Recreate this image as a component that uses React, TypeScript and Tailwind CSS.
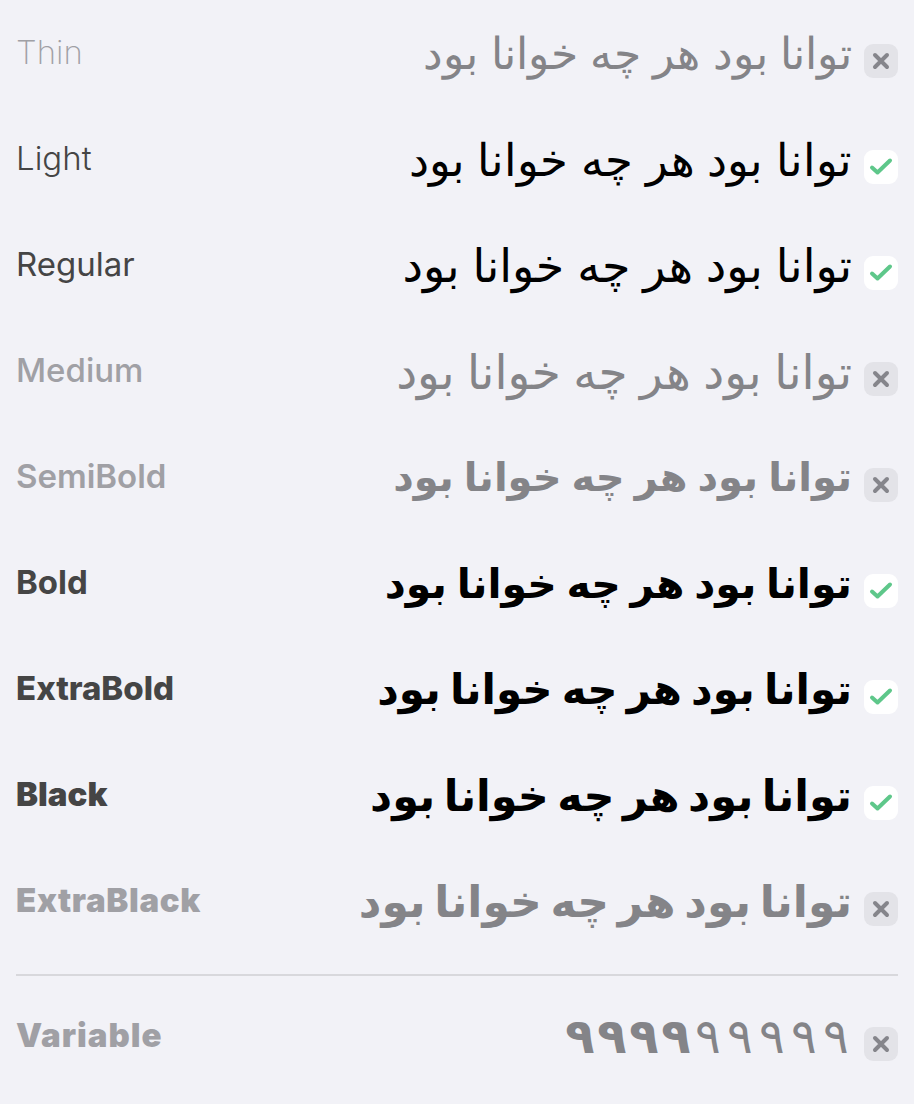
const SAMPLE = "توانا بود هر چه خوانا بود";

const WEIGHTS = [
  { name: "Thin", cls: "font-thin", label: "font-extralight", size: "text-[44px]", on: false },
  { name: "Light", cls: "font-light", label: "font-light", size: "text-[45px]", on: true },
  { name: "Regular", cls: "font-normal", label: "font-normal", size: "text-[46px]", on: true },
  { name: "Medium", cls: "font-medium", label: "font-medium", size: "text-[47px]", on: false },
  { name: "SemiBold", cls: "font-semibold", label: "font-semibold", size: "text-[40px]", on: false },
  { name: "Bold", cls: "font-bold", label: "font-bold", size: "text-[41px]", on: true },
  { name: "ExtraBold", cls: "font-extrabold", label: "font-extrabold", size: "text-[42px]", on: true },
  { name: "Black", cls: "font-black", label: "font-black", size: "text-[43px]", on: true },
  { name: "ExtraBlack", cls: "font-black", label: "font-black tracking-[0.02em]", size: "text-[44px]", on: false },
];

const DIGIT_WEIGHTS = [
  "font-black",
  "font-extrabold",
  "font-bold",
  "font-semibold",
  "font-medium",
  "font-normal",
  "font-light",
  "font-extralight",
  "font-thin",
];

function Mark({ on }: { on: boolean }) {
  return on ? (
    <span className="mt-[16px] flex h-[34px] w-[34px] shrink-0 rounded-[9px] bg-white">
      <svg viewBox="0 0 34 34" className="h-full w-full">
        <polyline
          points="8,17.5 13.5,22.5 26,10.5"
          fill="none"
          stroke="#5ec78a"
          strokeWidth={4}
          strokeLinecap="round"
          strokeLinejoin="round"
        />
      </svg>
    </span>
  ) : (
    <span className="mt-[16px] flex h-[34px] w-[34px] shrink-0 rounded-[9px] bg-[#e3e3e8]">
      <svg viewBox="0 0 34 34" className="h-full w-full">
        <path
          d="M11 11 L23 23 M23 11 L11 23"
          fill="none"
          stroke="#85858b"
          strokeWidth={4}
          strokeLinecap="round"
        />
      </svg>
    </span>
  );
}

type RowProps = { name: string; cls: string; label: string; size: string; on: boolean };

function Row({ name, cls, label, size, on }: RowProps) {
  return (
    <div className="flex h-[106px] items-center justify-between">
      <span className={`text-[33px] ${label} ${on ? "text-[#454545]" : "text-[#a0a0a5]"}`}>{name}</span>
      <div className="flex items-center gap-3">
        <span dir="rtl" className={`${size} ${cls} leading-none ${on ? "text-black" : "text-[#848488]"}`}>
          {SAMPLE}
        </span>
        <Mark on={on} />
      </div>
    </div>
  );
}

export default function App() {
  return (
    <div className="min-h-screen bg-[#f2f2f7] px-4 font-['Inter','DejaVu_Sans',sans-serif]">
      {WEIGHTS.map((w) => (
        <Row key={w.name} {...w} />
      ))}
      <div className="mt-5 h-[2px] bg-[#d8d8dc]" />
      <div className="flex h-[120px] items-center justify-between">
        <span className="text-[33px] font-black tracking-[0.03em] text-[#a0a0a5]">Variable</span>
        <div className="flex items-center gap-3">
          <div className="flex text-[48px] leading-none text-[#848488]">
            {DIGIT_WEIGHTS.map((d, i) => (
              <span key={i} className={`${d} w-[32px] text-center`}>
                ۹
              </span>
            ))}
          </div>
          <Mark on={false} />
        </div>
      </div>
    </div>
  );
}
